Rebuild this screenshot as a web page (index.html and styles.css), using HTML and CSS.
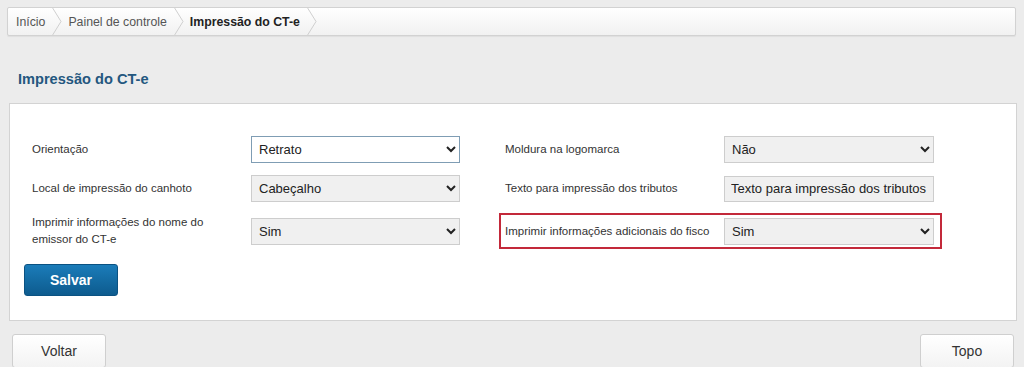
FILE: index.html
```html
<!DOCTYPE html>
<html lang="pt-BR">
<head>
  <meta charset="UTF-8" />
  <title>Impressão do CT-e</title>
  <link rel="stylesheet" href="styles.css">
</head>
<body>

  <!-- Trilha de navegação -->
  <nav class="breadcrumb">
    <a class="crumb" href="#">Início</a>
    <svg class="sep" width="12" height="29" viewBox="0 0 12 29"><polyline points="1,0 10,14.5 1,29" fill="none" stroke="#cfcfcf" stroke-width="1"/></svg>
    <a class="crumb" href="#">Painel de controle</a>
    <svg class="sep" width="12" height="29" viewBox="0 0 12 29"><polyline points="1,0 10,14.5 1,29" fill="none" stroke="#cfcfcf" stroke-width="1"/></svg>
    <span class="crumb current">Impressão do CT-e</span>
    <svg class="sep" width="12" height="29" viewBox="0 0 12 29"><polyline points="1,0 10,14.5 1,29" fill="none" stroke="#cfcfcf" stroke-width="1"/></svg>
  </nav>

  <h1 class="page-title">Impressão do CT-e</h1>

  <!-- Painel com o formulário -->
  <div class="panel">
    <form class="form-grid">
      <div class="field">
        <label>Orientação</label>
        <select class="focused">
          <option>Retrato</option>
          <option>Paisagem</option>
        </select>
      </div>
      <div class="field">
        <label>Moldura na logomarca</label>
        <select>
          <option>Não</option>
          <option>Sim</option>
        </select>
      </div>

      <div class="field">
        <label>Local de impressão do canhoto</label>
        <select>
          <option>Cabeçalho</option>
          <option>Rodapé</option>
        </select>
      </div>
      <div class="field">
        <label>Texto para impressão dos tributos</label>
        <input type="text" value="Texto para impressão dos tributos" />
      </div>

      <div class="field">
        <label>Imprimir informações do nome do emissor do CT-e</label>
        <select>
          <option>Sim</option>
          <option>Não</option>
        </select>
      </div>
      <div class="field highlight">
        <label>Imprimir informações adicionais do fisco</label>
        <select>
          <option>Sim</option>
          <option>Não</option>
        </select>
      </div>
    </form>

    <button class="btn-primary" type="button">Salvar</button>
  </div>

  <!-- Rodapé com botões -->
  <div class="footer">
    <button class="btn" type="button">Voltar</button>
    <button class="btn" type="button">Topo</button>
  </div>

</body>
</html>
```

FILE: styles.css
```css
/* Estilos gerais */
body {
  margin: 0;
  background: #ececec;
  font-family: "Liberation Sans", Arial, sans-serif;
  color: #333;
}

/* Trilha de navegação */
.breadcrumb {
  display: flex;
  align-items: center;
  height: 27px;
  margin: 7px 8px 0 7px;
  border: 1px solid #d2d2d2;
  border-radius: 2px;
  background: linear-gradient(#ffffff, #f1f1f1);
  box-shadow: 0 1px 1px rgba(0, 0, 0, 0.06);
  overflow: hidden;
}
.crumb {
  padding: 0 6px 0 5px;
  font-size: 12.3px;
  color: #555;
  text-decoration: none;
}
.crumb:first-child {
  padding-left: 8px;
}
.crumb.current {
  font-weight: bold;
  color: #222;
}
.sep {
  flex: none;
}

/* Título da página */
.page-title {
  margin: 33px 0 14px 18px;
  font-size: 14.6px;
  line-height: 20px;
  color: #24577f;
}

/* Painel principal */
.panel {
  margin: 0 7px 0 9px;
  padding: 32px 14px 24px;
  background: #fff;
  border: 1px solid #d3d3d3;
}

.form-grid {
  display: grid;
  grid-template-columns: 428px 429px;
  column-gap: 45px;
  row-gap: 12px;
  align-items: center;
  padding-left: 8px;
}

.field {
  display: flex;
  align-items: center;
  position: relative;
}
.field label {
  width: 206px;
  padding-right: 13px;
  font-size: 11.5px;
  line-height: 17px;
  color: #333;
}

select,
input[type="text"] {
  flex: 1;
  height: 27px;
  box-sizing: border-box;
  margin: 0;
  padding: 0 3px;
  font-family: "Liberation Sans", Arial, sans-serif;
  font-size: 13px;
  color: #222;
  background: #f0f0f0;
  border: 1px solid #cdcdcd;
  border-radius: 0;
  outline: none;
}
input[type="text"] {
  height: 26px;
  padding: 0 6px;
}
select.focused {
  background: #fff;
  border-color: #7f9db4;
}

/* Marcação em vermelho sobre o campo */
.highlight::after {
  content: "";
  position: absolute;
  top: -5px;
  bottom: -4px;
  left: -6px;
  right: -8px;
  border: 2px solid #c3293a;
  pointer-events: none;
}

/* Botão salvar */
.btn-primary {
  display: block;
  width: 94px;
  height: 32px;
  margin-top: 16px;
  font-family: "Liberation Sans", Arial, sans-serif;
  font-size: 14px;
  font-weight: bold;
  color: #fff;
  background: linear-gradient(#1b7cb9, #0d5b8e);
  border: 1px solid #0b5282;
  border-radius: 3px;
  cursor: pointer;
}

/* Rodapé */
.footer {
  display: flex;
  justify-content: space-between;
  margin: 13px 10px 0 12px;
}
.btn {
  width: 94px;
  height: 34px;
  font-family: "Liberation Sans", Arial, sans-serif;
  font-size: 14px;
  color: #333;
  background: linear-gradient(#ffffff, #f3f3f3);
  border: 1px solid #cfcfcf;
  border-radius: 3px;
  cursor: pointer;
}
```
